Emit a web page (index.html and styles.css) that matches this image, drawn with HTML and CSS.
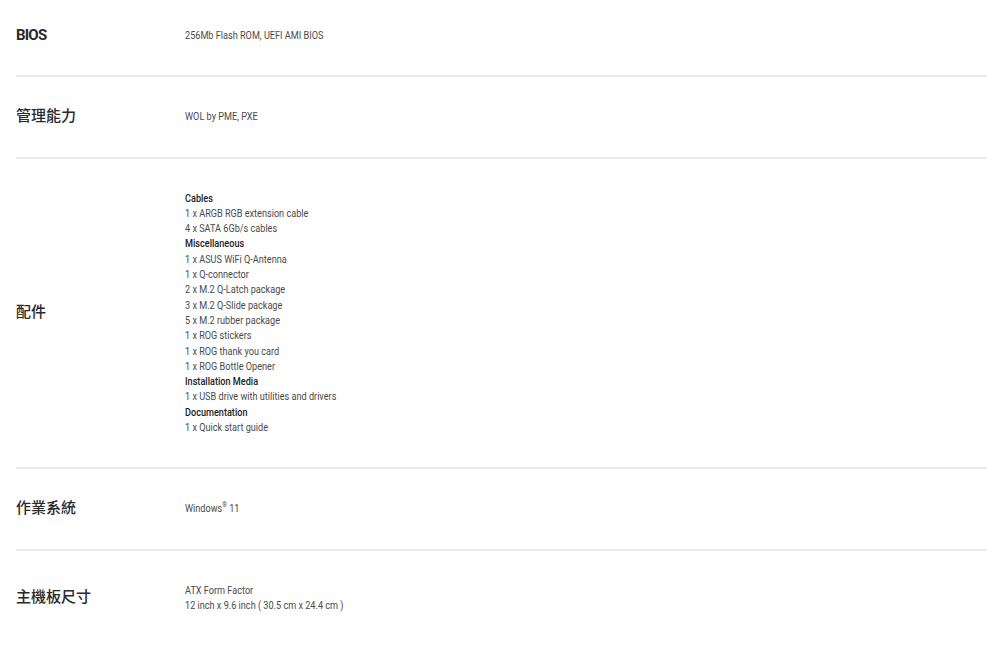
FILE: index.html
```html
<!DOCTYPE html>
<html>
<head>
    <title>規格</title>
    <link rel="stylesheet" href="styles.css">
</head>
<body>
    <div class="spec-list">
        <div class="spec-row">
            <div class="spec-label latin">BIOS</div>
            <div class="spec-value">256Mb Flash ROM, UEFI AMI BIOS</div>
        </div>
        <div class="spec-row">
            <div class="spec-label">管理能力</div>
            <div class="spec-value">WOL by PME, PXE</div>
        </div>
        <div class="spec-row">
            <div class="spec-label">配件</div>
            <div class="spec-value">
                <b>Cables</b><br>
                1 x ARGB RGB extension cable<br>
                4 x SATA 6Gb/s cables<br>
                <b>Miscellaneous</b><br>
                1 x ASUS WiFi Q-Antenna<br>
                1 x Q-connector<br>
                2 x M.2 Q-Latch package<br>
                3 x M.2 Q-Slide package<br>
                5 x M.2 rubber package<br>
                1 x ROG stickers<br>
                1 x ROG thank you card<br>
                1 x ROG Bottle Opener<br>
                <b>Installation Media</b><br>
                1 x USB drive with utilities and drivers<br>
                <b>Documentation</b><br>
                1 x Quick start guide
            </div>
        </div>
        <div class="spec-row">
            <div class="spec-label">作業系統</div>
            <div class="spec-value">Windows<sup>®</sup> 11</div>
        </div>
        <div class="spec-row">
            <div class="spec-label">主機板尺寸</div>
            <div class="spec-value">ATX Form Factor<br>12 inch x 9.6 inch ( 30.5 cm x 24.4 cm )</div>
        </div>
    </div>
</body>
</html>
```

FILE: styles.css
```css
body {
    background-color: #fff;
    font-family: Roboto, "Noto Sans CJK TC", sans-serif;
    margin: 0;
    padding: 0 13px 0 16px;
}

.spec-list {
    margin-top: -4px;
}

.spec-row {
    display: flex;
    align-items: center;
    padding: 32px 0;
    border-bottom: 2px solid #ebebeb;
}

.spec-row:last-child {
    border-bottom: none;
}

.spec-label {
    width: 169px;
    flex-shrink: 0;
    font-size: 15px;
    line-height: 15px;
    font-weight: 500;
    color: #2a2a2a;
}

.spec-label.latin {
    font-weight: 700;
    letter-spacing: -0.8px;
}

/* narrow face: squeeze the text, the layout box keeps its height */
.spec-value {
    font-size: 11px;
    line-height: 15.3px;
    color: #4a4a4a;
    transform: scaleX(0.83);
    transform-origin: left center;
}

.spec-value b {
    color: #222;
    font-weight: 500;
}

.spec-value sup {
    font-size: 7px;
    line-height: 0;
}
```
